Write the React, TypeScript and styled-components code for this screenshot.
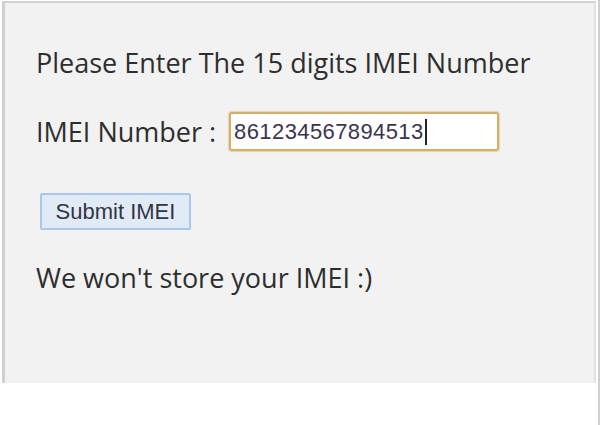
import styled, { createGlobalStyle } from "styled-components";

const GlobalStyle = createGlobalStyle`
  html, body {
    margin: 0;
    padding: 0;
    background: #ffffff;
  }
`;

const Page = styled.div`
  width: 600px;
  height: 425px;
  box-sizing: border-box;
  padding: 1px 2px 0 2px;
  border-right: 2px solid #d0d0d0;
`;

const Panel = styled.div`
  height: 382px;
  box-sizing: border-box;
  background: #f2f2f2;
  border-top: 2px solid #d2d2d2;
  border-left: 3px solid #d0d0d0;
  border-right: 2px solid #e2e2e2;
  padding: 42px 0 0 31px;
  font-family: "Open Sans", "Noto Sans", sans-serif;
  color: #2e2e2e;
`;

const Line = styled.div<{ $gap: number }>`
  font-size: 27px;
  line-height: 36px;
  margin-bottom: ${(p) => p.$gap}px;
  display: flex;
  align-items: center;
  white-space: nowrap;
`;

const Label = styled.span`
  margin-right: 13px;
`;

const ImeiInput = styled.div`
  width: 270px;
  height: 39px;
  box-sizing: border-box;
  border: 2px solid #d6b06a;
  border-radius: 3px;
  box-shadow: 0 0 1px 1px #e9d3a8;
  background: #ffffff;
  display: flex;
  align-items: center;
  padding-left: 3px;
  font-family: "Liberation Sans", Arial, sans-serif;
  font-size: 22px;
  letter-spacing: 0.4px;
  color: #3a3550;
`;

const Caret = styled.span`
  display: inline-block;
  width: 2px;
  height: 26px;
  background: #222;
  margin-left: 1px;
`;

const SubmitButton = styled.button`
  margin: 0 0 30px 4px;
  width: 151px;
  height: 37px;
  box-sizing: border-box;
  border: 2px solid #a9c7ea;
  border-radius: 2px;
  background: #e1ebf7;
  font-family: "Liberation Sans", Arial, sans-serif;
  font-size: 22px;
  color: #333344;
  padding: 0;
  display: block;
`;

export default function App() {
  return (
    <>
      <GlobalStyle />
      <Page>
        <Panel>
          <Line $gap={31}>Please Enter The 15 digits IMEI Number</Line>
          <Line $gap={42}>
            <Label>IMEI Number :</Label>
            <ImeiInput>
              861234567894513
              <Caret />
            </ImeiInput>
          </Line>
          <SubmitButton>Submit IMEI</SubmitButton>
          <Line $gap={0}>We won't store your IMEI :)</Line>
        </Panel>
      </Page>
    </>
  );
}
